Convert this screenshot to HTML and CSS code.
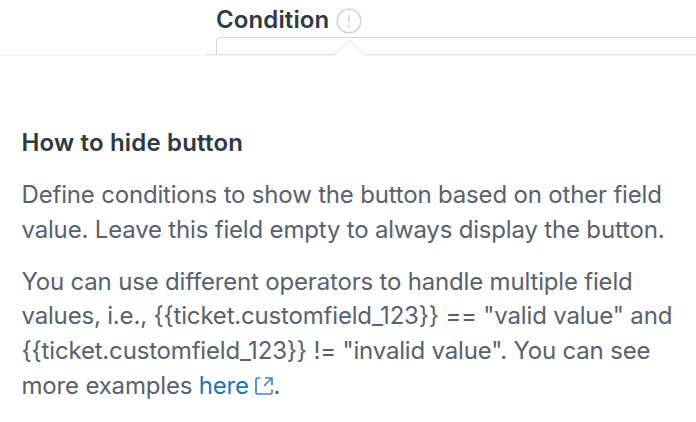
FILE: index.html
```html
<!DOCTYPE html>
<html lang="en">
<head>
  <meta charset="UTF-8" />
  <meta name="viewport" content="width=device-width, initial-scale=1.0" />
  <title>Condition</title>
  <link rel="stylesheet" href="styles.css">
</head>
<body>
  <div class="field">
    <div class="label">
      <span>Condition</span>
      <svg class="info-icon" viewBox="0 0 26 26">
        <circle cx="13" cy="13" r="11.8" />
        <path d="M13 6.5v7.8M13 17v2.4" />
      </svg>
    </div>
    <div class="input"></div>
  </div>

  <div class="popover">
    <svg class="arrow" viewBox="0 0 30 17">
      <path d="M0 15.5L15 1L30 15.5V17H0Z" fill="#fefefe" />
      <path d="M0 15.5L15 1L30 15.5" fill="none" stroke="#dcdfe1" />
    </svg>
    <h4>How to hide button</h4>
    <p>Define conditions to show the button based on other field<br>value. Leave this field empty to always display the button.</p>
    <p>You can use different operators to handle multiple field<br>values, i.e., {{ticket.customfield_123}} == "valid value" and<br>{{ticket.customfield_123}} != "invalid value". You can see<br>more examples <a href="#">here <svg class="external" viewBox="0 0 18 18"><path d="M5.5 1H2.5Q1 1 1 2.5V15.5Q1 17 2.5 17H15.5Q17 17 17 15.5V12.5M10 1H17V8M17 1L9 9" /></svg></a>.</p>
  </div>
</body>
</html>
```
FILE: styles.css
```css
* {
  box-sizing: border-box;
}

body {
  margin: 0;
  height: 422px;
  overflow: hidden;
  background: #fefefe;
  font-family: Inter, "Liberation Sans", sans-serif;
  font-size: 24px;
  color: #58626c;
}

.field {
  height: 55px;
  margin-left: 206px;
  padding-left: 10px;
  border-bottom: 1px solid #e2e4e5;
  overflow: hidden;
}

.label {
  display: flex;
  align-items: center;
  gap: 7px;
  height: 37px;
  line-height: 32px;
  font-weight: 600;
  letter-spacing: 0.12px;
  color: #2f3941;
}

.label span {
  margin-top: 3px;
}

.info-icon {
  width: 26px;
  height: 26px;
  margin-top: 5px;
  fill: none;
  stroke: #d0d5da;
  stroke-width: 1.6;
}

.input {
  height: 40px;
  border: 1px solid #d3d8db;
  border-right: none;
  border-radius: 5px 0 0 5px;
}

.popover {
  position: relative;
  height: 367px;
  padding: 70px 0 0 21.5px;
  border-top: 1px solid #f1f2f2;
  background: #fefefe;
  line-height: 34.6px;
  letter-spacing: -0.18px;
  white-space: nowrap;
}

.arrow {
  position: absolute;
  left: 335px;
  top: -17px;
  width: 30px;
  height: 17px;
}

h4 {
  margin: 0 0 17.4px;
  font-size: 24px;
  font-weight: 600;
  letter-spacing: 0.18px;
  color: #2f3941;
}

p {
  margin: 0 0 17.6px;
}

a {
  color: #1f73b7;
  text-decoration: none;
}

.external {
  width: 18px;
  height: 18px;
  vertical-align: -1px;
  fill: none;
  stroke: #4482c3;
  stroke-width: 1.7;
}
```
